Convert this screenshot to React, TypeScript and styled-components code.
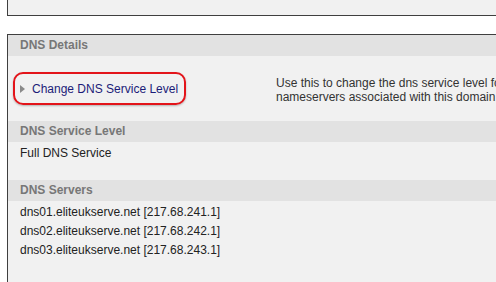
import styled, { createGlobalStyle } from "styled-components";

const GlobalStyle = createGlobalStyle`
  html, body {
    margin: 0;
    padding: 0;
    background: #ffffff;
    overflow: hidden;
  }
  body {
    font-family: "Liberation Sans", Arial, Helvetica, sans-serif;
    font-size: 12px;
    color: #222222;
  }
`;

const Page = styled.div`
  width: 496px;
  height: 282px;
  overflow: hidden;
  padding-left: 7px;
  box-sizing: border-box;
`;

const Panel = styled.div<{ $cutTop?: boolean }>`
  width: 560px;
  background: #f1f1f1;
  border: 1px solid #3f3f3f;
  border-top: ${(p) => (p.$cutTop ? "none" : "1px solid #3f3f3f")};
  box-sizing: border-box;
`;

const TopPanel = styled(Panel)`
  height: 16px;
  margin-bottom: 18px;
`;

const SectionHeader = styled.div`
  height: 21px;
  line-height: 21px;
  background: #e2e2e2;
  color: #777777;
  font-weight: bold;
  padding-left: 12px;
`;

const DetailsRow = styled.div`
  height: 65px;
  display: flex;
  align-items: center;
`;

const ActionCell = styled.div`
  flex: 0 0 268px;
  padding-left: 5px;
  box-sizing: border-box;
  display: flex;
  align-items: center;
`;

const Highlight = styled.div`
  height: 33px;
  width: 173px;
  box-sizing: border-box;
  border: 2px solid #e3141a;
  border-radius: 10px;
  box-shadow: 0 1px 2px rgba(0, 0, 0, 0.25);
  display: flex;
  align-items: center;
  padding-left: 5px;
  gap: 7px;
`;

const Caret = styled.span`
  width: 0;
  height: 0;
  border-top: 4px solid transparent;
  border-bottom: 4px solid transparent;
  border-left: 5px solid #8a8a8a;
`;

const ActionLink = styled.a`
  color: #1c1c78;
  text-decoration: none;
  white-space: nowrap;
`;

const Description = styled.div`
  line-height: 14px;
  color: #333333;
  white-space: nowrap;
  margin-top: 3px;
`;

const ValueList = styled.div<{ $bottom: number }>`
  padding: 2px 12px ${(p) => p.$bottom}px;
  line-height: 19px;
  color: #222222;
`;

const servers = [
  "dns01.eliteukserve.net [217.68.241.1]",
  "dns02.eliteukserve.net [217.68.242.1]",
  "dns03.eliteukserve.net [217.68.243.1]",
];

export default function App() {
  return (
    <>
      <GlobalStyle />
      <Page>
        <TopPanel $cutTop />
        <Panel>
          <SectionHeader>DNS Details</SectionHeader>
          <DetailsRow>
            <ActionCell>
              <Highlight>
                <Caret />
                <ActionLink href="#">Change DNS Service Level</ActionLink>
              </Highlight>
            </ActionCell>
            <Description>
              Use this to change the dns service level for this domain, and the
              <br />
              nameservers associated with this domain.
            </Description>
          </DetailsRow>
          <SectionHeader>DNS Service Level</SectionHeader>
          <ValueList $bottom={17}>Full DNS Service</ValueList>
          <SectionHeader>DNS Servers</SectionHeader>
          <ValueList $bottom={30}>
            {servers.map((s) => (
              <div key={s}>{s}</div>
            ))}
          </ValueList>
        </Panel>
      </Page>
    </>
  );
}
